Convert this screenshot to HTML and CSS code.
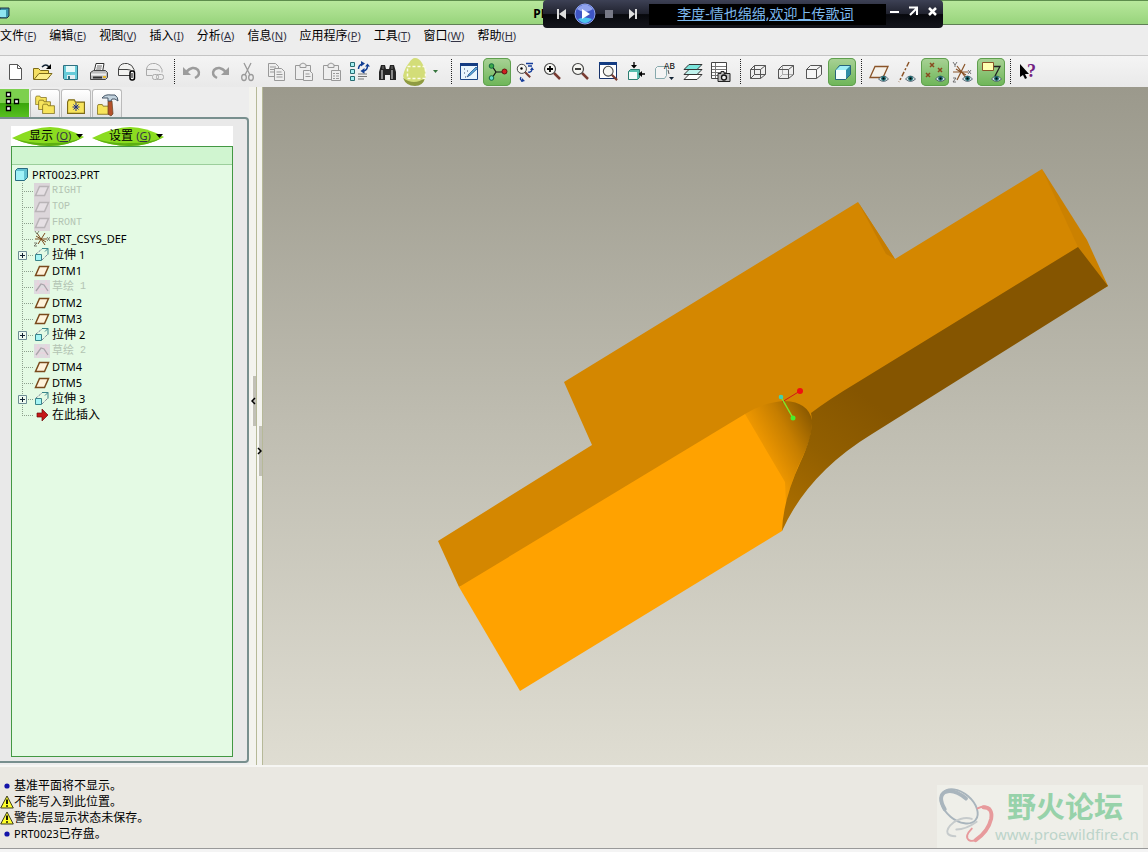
FILE: index.html
```html
<!DOCTYPE html>
<html lang="zh-CN">
  <head>
    <meta charset="UTF-8" />
    <meta name="viewport" content="width=device-width, initial-scale=1.0" />
    <title>PRT0023</title>
    <link rel="stylesheet" href="styles.css">
  </head>
  <body>
    <!-- shared icons -->
    <svg class="defs" aria-hidden="true">
      <symbol id="branch" viewBox="0 0 22 16"><path class="dots" d="M10.5 0v16M12 8.500h9" /></symbol>
      <symbol id="last" viewBox="0 0 22 16"><path class="dots" d="M10.500 0v9M12 8.500h9" /></symbol>
      <symbol id="plus" viewBox="0 0 22 16"><path class="dots" d="M10.500 0v16M12 8.500h9" /><path d="M6.500 4.500h8v8h-8z" fill="#eefaf0" stroke="#6d8c94" /><path d="M8 8.500h5M10.500 6v5" stroke="#123" /></symbol>
      <symbol id="plane" viewBox="0 0 16 16"><path d="M5.500 3.500h9l-4 9h-9z" fill="#fff3dc" stroke="#7a4a1c" stroke-width="1.500" /></symbol>
      <symbol id="plane-off" viewBox="0 0 16 16"><path d="M0 0h16v16H0z" fill="#dcd6da" /><path d="M5.500 3.500h9l-4 9h-9z" fill="#e6e0e4" stroke="#b9b4b7" stroke-width="1.500" /></symbol>
      <symbol id="sketch-off" viewBox="0 0 16 16"><path d="M0 1h16v14H0z" fill="#dedbdf" /><path d="M1 5h14M1 10h14M4 1v14M12 1v14" stroke="#ecd0dd" /><path d="M2 12l5-7 3 1 4 6" fill="none" stroke="#a9a5aa" stroke-width="1.300" /></symbol>
      <symbol id="extrude" viewBox="0 0 16 16"><path d="M1.500 7.500h6v6h-6z" fill="#a5f4f4" stroke="#39858b" /><path d="M2 7l6-5M8 13l6-6" stroke="#557" stroke-dasharray="1 1" /><path d="M8 1.500h6v6M11 4.500l3-3" fill="none" stroke="#39858b" /></symbol>
      <symbol id="csys" viewBox="0 0 16 16"><path d="M1 8h12M3 2l8 12M11 2L4 13M2 5l10 6" stroke="#7a4a1c" fill="none" /><path d="M1 0l2 3 2-3M13 6l3 4m0-4l-3 4M0 12h3l-3 3h3" stroke="#665" fill="none" stroke-width=".8" /></symbol>
      <symbol id="part" viewBox="0 0 16 16"><path d="M1.500 3.500l2-2h10v9l-3 3h-9z" fill="#62c3d3" stroke="#276b80" /><path d="M2 4h8v9H2z" fill="#a0f2f8" /></symbol>
      <symbol id="insert" viewBox="0 0 16 16"><path d="M3 6h5V2l6 6-6 6v-4H3z" fill="#c41717" stroke="#6d0c0c" stroke-width=".7" /></symbol>
      <symbol id="warn" viewBox="0 0 14 14"><path d="M7 1l6.300 12H.7z" fill="#ffff2a" stroke="#3b3b20" /><path d="M7 4.500v4.500M7 10.300v1.500" stroke="#000" stroke-width="1.800" /></symbol>
      <symbol id="dot" viewBox="0 0 14 14"><circle cx="7" cy="7" r="2.600" fill="#1414a8" /></symbol>
      <symbol id="eye" viewBox="0 0 10 7"><path d="M0 4q5-6 10 0-5 5-10 0z" fill="#cfe3e3" stroke="#345" stroke-width=".7" /><circle cx="5" cy="3.500" r="2.400" fill="#17646b" /><circle cx="5" cy="3.500" r="1" /></symbol>
      <symbol id="lens" viewBox="0 0 18 18"><path d="M11 11l6 6" stroke="#7a3c32" stroke-width="2.500" /><circle cx="7" cy="7" r="5.500" fill="#f6f6f2" stroke="#444" stroke-width="1.200" /></symbol>
      <symbol id="folder" viewBox="0 0 16 14"><path d="M.5 3.500l1-2h5l1 2h8v10H.5z" fill="#f7e45c" stroke="#7c6a18" /></symbol>
    </svg>

    <header class="titlebar">
      <svg class="app-icon" viewBox="0 0 10 12"><path d="M0 1h9v8l-2 2H0z" fill="#3a96aa" stroke="#234" /><path d="M0 3h6v7H0z" fill="#8fe6f2" /></svg>
      <h1>PR</h1>
    </header>

    <nav class="menubar">
      <button>文件<span>(<u>F</u>)</span></button>
      <button>编辑<span>(<u>E</u>)</span></button>
      <button>视图<span>(<u>V</u>)</span></button>
      <button>插入<span>(<u>I</u>)</span></button>
      <button>分析<span>(<u>A</u>)</span></button>
      <button>信息<span>(<u>N</u>)</span></button>
      <button>应用程序<span>(<u>P</u>)</span></button>
      <button>工具<span>(<u>T</u>)</span></button>
      <button>窗口<span>(<u>W</u>)</span></button>
      <button>帮助<span>(<u>H</u>)</span></button>
    </nav>

    <div class="toolbar">
      <button aria-label="新建"><svg viewBox="0 0 28 28"><path d="M8.500 6.500h8l4 4v11h-12z" fill="#fff" stroke="#555" /><path d="M16.500 6.500v4h4" fill="none" stroke="#555" /></svg></button>
      <button aria-label="打开"><svg viewBox="0 0 28 28"><path d="M4.500 21.500v-11h5l2 2h8v3" fill="#f5df62" stroke="#7c6a18" /><path d="M5 21.500l5-6h13l-5 6z" fill="#fbee8a" stroke="#7c6a18" /><path d="M13 9q4-4 7 0" fill="none" stroke="#123" stroke-width="1.500" /><path d="M22 6v5h-5z" /></svg></button>
      <button aria-label="保存"><svg viewBox="0 0 28 28"><path d="M6.500 7.500h14v14h-13l-1-1z" fill="#67ccd9" stroke="#2f7080" /><path d="M9 8h9v6H9z" fill="#e6fafa" /><path d="M10 17h8v4h-8z" fill="#e6eef0" /><path d="M11 18h2v3h-2z" fill="#2f7080" /></svg></button>
      <button aria-label="打印"><svg viewBox="0 0 28 28"><path d="M9 14l2-8.500h8L17.500 14" fill="#fff" stroke="#333" /><path d="M12 8h5M11.500 10h5M11 12h5" stroke="#666" /><path d="M5.500 14.500l3-2h12l2 2v5l-2 2h-15z" fill="#bbb" stroke="#444" /><path d="M6 15.500h15v2H6z" fill="#eee" /><path d="M8 19.500h9" stroke="#333" stroke-width="2" /><path d="M18 19h3" stroke="#e8b72c" stroke-width="2" /></svg></button>
      <button aria-label="发送邮件"><svg viewBox="0 0 28 28"><path d="M17 17.500H5.500V11q1-5 6-5.500h3q5 1 6.500 6v2" fill="#f2f2f0" stroke="#444" /><path d="M6 11.500h8q4 0 5 2" fill="none" stroke="#444" /><rect x="17" y="13" width="4.500" height="9" rx="2" fill="#fff" stroke="#000" stroke-width="1.500" /><path d="M19 15v5" stroke="#000" /></svg></button>
      <button aria-label="发送链接"><svg viewBox="0 0 28 28"><g fill="none" stroke="#aaa"><path d="M11 17.500H5.500V11q1-5 6-5.500h3q5 1 6.500 6v3M6 11.500h8q4 0 5 2" /><rect x="11.500" y="16.500" width="6" height="5" rx="2" /><rect x="15.500" y="16.500" width="7" height="5" rx="2" /></g></svg></button>
      <i class="sep"></i>
      <button aria-label="撤销"><svg viewBox="0 0 28 28"><path d="M8 14q7-7 12-2 3 5-3 8" fill="none" stroke="#9c9c9c" stroke-width="2.500" /><path d="M5 9v8h8z" fill="#9c9c9c" /></svg></button>
      <button aria-label="重做"><svg viewBox="0 0 28 28"><path d="M20 14q-7-7-12-2-3 5 3 8" fill="none" stroke="#9c9c9c" stroke-width="2.500" /><path d="M23 9v8h-8z" fill="#9c9c9c" /></svg></button>
      <button aria-label="剪切"><svg viewBox="0 0 28 28"><g fill="none" stroke="#999" stroke-width="1.300"><path d="M10 5l6 12M17 5l-6 12" /><ellipse cx="10" cy="19.500" rx="2.300" ry="3" /><ellipse cx="17" cy="19.500" rx="2.300" ry="3" /></g></svg></button>
      <button aria-label="复制"><svg viewBox="0 0 28 28"><g fill="#eee" stroke="#999"><path d="M6.500 5.500h7l3 3v10h-10z" /><path d="M8 9h6M8 11.500h6M8 14h6" /><path d="M12.500 10.500h7l3 3v9h-10z" /><path d="M14.500 14h5M14.500 16.500h6M14.500 19h6" /></g></svg></button>
      <button aria-label="粘贴"><svg viewBox="0 0 28 28"><g fill="#eee" stroke="#999"><path d="M5.500 7.500h15v14h-15z" /><path d="M10 9.500V6.500l3-1.500 3 1.500v3z" /><path d="M13.500 12.500h6l3 3v7h-9z" /><path d="M15.500 16h4M15.500 18.500h5" /></g></svg></button>
      <button aria-label="选择性粘贴"><svg viewBox="0 0 28 28"><g fill="#eee" stroke="#999"><path d="M5.500 7.500h15v14h-15z" /><path d="M10 9.500V6.500l3-1.500 3 1.500v3z" /><path d="M13.500 12.500h9v10h-9z" /><path d="M15 15.500h2M18 15.500h3M15 18h2M18 18h3M15 20.500h2M18 20.500h3" /></g></svg></button>
      <button aria-label="再生"><svg viewBox="0 0 28 28"><g fill="#a5eef0" stroke="#286c72"><path d="M4.500 4.500h4v4h-4zM4.500 11.500h4v4h-4zM4.500 18.500h4v4h-4z" /></g><path d="M12.500 11q0-4 4-5M21.500 8q0 4-4 5" fill="none" stroke="#123f94" stroke-width="1.500" /><path d="M15 3l4 2.500-4 3zM18.500 10v6l-4-3zM19 8.500h5l-2.500-3z" fill="#123f94" /><path d="M12 16h9M12 18.500h9M12 21h6" stroke="#777" /></svg></button>
      <button aria-label="查找"><svg viewBox="0 0 28 28"><path d="M5 14l2-7h4l1 4h3l1-4h4l2 7v8h-6v-5h-5v5H5z" fill="#252525" /><path d="M8 12v9M18 12v9" stroke="#aaa" stroke-width="1.500" /><path d="M9 8v3M18 8v3" stroke="#777" /></svg></button>
      <button aria-label="选取"><svg viewBox="0 0 28 28"><path d="M1 18Q3 9 7 5q3-5 6-5 4 0 7 5 3 5 4 13-2 9-11 9-10 0-12-9z" fill="#d3dd78" /><path d="M1 20q11 8 22 0-2 8-10 8-9 0-12-8z" fill="#8f9b42" /><path d="M5.500 8.500h18v12h-18z" fill="none" stroke="#fbfbe8" stroke-dasharray="3 2" stroke-width="1.500" /></svg></button>
      <button class="drop" aria-label="选取选项"><svg viewBox="0 0 16 28"><path d="M3 12h5l-2.500 3z" fill="#34733c" /></svg></button>
      <i class="sep"></i>
      <button aria-label="重画"><svg viewBox="0 0 28 28"><path d="M5.500 5.500h17v16h-17z" fill="#e9f6fd" stroke="#1b4686" /><path d="M5 5h18v3H5z" fill="#143c82" /><path d="M9 11l1 0M12 13h1M9 15h1M13 17h1M10 19h1" stroke="#346" /><path d="M12 19l2-3 7-7 1.500 1.500-7 6.500z" fill="#5aa9d8" stroke="#1b4686" stroke-width=".7" /></svg></button>
      <button class="on" aria-label="旋转中心"><svg viewBox="0 0 28 28"><path d="M9 8l4 6-4 6M13 14h10" fill="none" stroke="#111" stroke-width="1.200" /><circle cx="8.500" cy="8" r="2.300" fill="#3aa946" stroke="#164" /><circle cx="8.500" cy="20" r="2.300" fill="#63d8c8" stroke="#164" /><circle cx="21.500" cy="13.500" r="2.500" fill="#d02020" stroke="#611" /></svg></button>
      <button aria-label="定向模式"><svg viewBox="0 0 28 28"><use href="#lens" x="5" y="5" width="15" height="15" /><circle cx="10.500" cy="10.500" r="1.200" /><path d="M15 5.500h7M17 8h4M21 12q-1 3-4 2M10 19q-2 3 2 4" fill="none" stroke="#143c9a" stroke-width="1.300" /><path d="M11 20l3 3-4 1zM21 9l2 3h-4z" fill="#143c9a" /></svg></button>
      <button aria-label="放大"><svg viewBox="0 0 28 28"><use href="#lens" x="4" y="4" width="18" height="18" /><path d="M8 11h6M11 8v6" stroke="#000" stroke-width="1.800" /></svg></button>
      <button aria-label="缩小"><svg viewBox="0 0 28 28"><use href="#lens" x="4" y="4" width="18" height="18" /><path d="M8 11h6" stroke="#000" stroke-width="1.500" /></svg></button>
      <button aria-label="重新调整"><svg viewBox="0 0 28 28"><path d="M4.500 5.500h17v15h-17z" fill="#fff" stroke="#16326b" /><path d="M4 4h18v3H4z" fill="#143c82" /><use href="#lens" x="7" y="7" width="16" height="16" /></svg></button>
      <button aria-label="重定向"><svg viewBox="0 0 28 28"><path d="M5.500 13.500l2-2h9v8l-2 2h-9z" fill="#56bfae" stroke="#2d7c70" /><path d="M6 14h8v7H6z" fill="#f3fbf9" /><path d="M11 4v4M17 16h5" stroke="#000" stroke-width="1.300" /><path d="M8 7h6l-3 3.500zM19 13v6l-3.500-3z" /></svg></button>
      <button aria-label="已保存视图"><svg viewBox="0 0 28 28"><path d="M4.500 10.500l2-2h9v9l-2 3h-9z" fill="#f4f4f4" stroke="#87a9ad" /><text x="13" y="11" class="ab">AB</text><path d="M18 19h5l-2.500 3z" fill="#123" /><path d="M17 12l1 4" stroke="#555" /></svg></button>
      <button aria-label="层"><svg viewBox="0 0 28 28"><g stroke="#333"><path d="M5 21.500l5-5h13l-5 5z" fill="#fff" /><path d="M5 16.500l5-5h13l-5 5z" fill="#bff3ee" /><path d="M5 11.500l5-5h13l-5 5z" fill="#7be5dc" /></g></svg></button>
      <button aria-label="视图管理器"><svg viewBox="0 0 28 28"><path d="M4.500 4.500h15v16h-15z" fill="#fff" stroke="#444" /><path d="M8.500 5v15M5 8.500h14M5 11.500h14M5 14.500h14M5 17.500h14" stroke="#777" /><path d="M11 15.500h3v-2h3v2h6v8H11z" fill="#bbb" stroke="#222" /><circle cx="17" cy="19.500" r="2.500" fill="#eee" stroke="#111" stroke-width="1.300" /></svg></button>
      <i class="sep"></i>
      <button aria-label="线框"><svg viewBox="0 0 28 28"><path d="M6.500 11.500h10v9h-10zM10.500 7.500h11v9h-11zM6.500 11.500l4-4M16.500 11.500l5-4M6.500 20.500l4-4M16.500 20.500l5-4" fill="none" stroke="#555" /></svg></button>
      <button aria-label="隐藏线"><svg viewBox="0 0 28 28"><path d="M10.500 8v8.500h11M6.500 20.500l4-4" fill="none" stroke="#aaa" /><path d="M6.500 11.500h10v9h-10zl4-4h11v9l-5 4M16.500 11.500l5-4" fill="none" stroke="#555" /></svg></button>
      <button aria-label="无隐藏线"><svg viewBox="0 0 28 28"><path d="M6.500 11.500h10v9h-10zl4-4h11v9l-5 4M16.500 11.500l5-4" fill="#f5f5f5" stroke="#555" /></svg></button>
      <button class="on" aria-label="着色"><svg viewBox="0 0 28 28"><path d="M7.500 12.500l4-5h11v9l-5 5h-10z" fill="#2f8ea5" stroke="#27647a" /><path d="M8 12l4-4h10l-4 4z" fill="#9eeef5" /><path d="M8 12h10v9H8z" fill="#f4ffff" /></svg></button>
      <i class="sep"></i>
      <button aria-label="基准平面"><svg viewBox="0 0 28 28"><path d="M10 8.500h13l-5 11H5z" fill="#f4f1ea" stroke="#8a5428" stroke-width="1.300" /><use href="#eye" x="13" y="17" width="11" height="7" /></svg></button>
      <button aria-label="基准轴"><svg viewBox="0 0 28 28"><path d="M16 4L6 24" stroke="#8a5428" stroke-width="1.500" stroke-dasharray="5 2 2 2" /><use href="#eye" x="12" y="17" width="11" height="7" /></svg></button>
      <button class="on" aria-label="基准点"><svg viewBox="0 0 28 28"><path d="M9 5l4 4m0-4l-4 4M17 10l4 4m0-4l-4 4M5 15l4 4m0-4l-4 4" stroke="#8a4a20" stroke-width="1.500" /><use href="#eye" x="14" y="17" width="11" height="7" /></svg></button>
      <button aria-label="坐标系"><svg viewBox="0 0 28 28"><path d="M4 14h15M8 8l9 12M16 6L8 22M7 11l10 6" stroke="#8a5428" stroke-width="1.200" /><path d="M4 4l2 3 2-3M6 7v2M19 12l3 4m0-4l-3 4M4 20h3l-3 4h3" stroke="#555" fill="none" stroke-width=".8" /><use href="#eye" x="13" y="17" width="11" height="7" /></svg></button>
      <button class="on" aria-label="注释"><svg viewBox="0 0 28 28"><path d="M5.500 4.500h11v8h-11z" fill="#ffffb0" stroke="#8a5428" /><path d="M17 8.500h6L18 18" fill="none" stroke="#222" stroke-width="1.300" /><use href="#eye" x="14" y="17" width="11" height="7" /></svg></button>
      <i class="sep"></i>
      <button aria-label="上下文帮助"><svg viewBox="0 0 28 28"><path d="M6 6v13l3-2 2 4 2-1-2-4h4z" /><text x="13" y="19" class="help">?</text></svg></button>
    </div>

    <main class="workspace">
      <aside class="navigator">
        <div class="tabs">
          <button class="active" aria-label="模型树"><svg viewBox="0 0 30 28"><path d="M6.500 4.500h4v4h-4zM6.500 11.500h4v4h-4zM6.500 18.500h4v4h-4zM14.500 11.500h4v4h-4z" fill="#fff" stroke="#000" stroke-width="1.300" /></svg></button>
          <button aria-label="文件夹浏览器"><svg viewBox="0 0 30 28"><use href="#folder" x="5" y="5" width="12" height="10" /><use href="#folder" x="8" y="9" width="13" height="11" /><use href="#folder" x="12" y="13" width="13" height="11" /></svg></button>
          <button aria-label="收藏夹"><svg viewBox="0 0 30 28"><use href="#folder" x="6" y="8" width="18" height="16" /><path d="M15 13v8M11.500 17h7M12.500 14.500l5 5M17.500 14.500l-5 5" stroke="#1c2c8c" /></svg></button>
          <button aria-label="连接"><svg viewBox="0 0 30 28"><use href="#folder" x="5" y="13" width="13" height="12" /><path d="M16 11h4l1 13-2 2-3-2z" fill="#b5502a" stroke="#642" stroke-width=".7" /><path d="M10 8q3-4 9-3h4q3 2 3 6-3-3-6-2l-1 2h-3V8z" fill="#c3d3de" stroke="#456" /></svg></button>
        </div>
        <section class="panel">
          <div class="tree-tools">
            <button><svg viewBox="0 0 72 20"><path d="M0 12Q22 1 38 1q16 0 34 10-16 9-35 9T0 12z" fill="#8bdc20" /><path d="M0 12q18 6 38 5 20 0 34-6-16 9-35 9T0 12z" fill="#5daf12" /><path d="M64 8h7l-3.500 4z" /></svg><b>显示 <span>(<u>O</u>)</span></b></button>
            <button><svg viewBox="0 0 72 20"><path d="M0 12Q22 1 38 1q16 0 34 10-16 9-35 9T0 12z" fill="#8bdc20" /><path d="M0 12q18 6 38 5 20 0 34-6-16 9-35 9T0 12z" fill="#5daf12" /><path d="M64 8h7l-3.500 4z" /></svg><b>设置 <span>(<u>G</u>)</span></b></button>
          </div>
          <div class="tree">
            <div class="tree-head"></div>
            <ul>
              <li class="root"><svg class="icon"><use href="#part" /></svg><span>PRT0023.PRT</span></li>
              <li class="off"><svg class="branch"><use href="#branch" /></svg><svg class="icon"><use href="#plane-off" /></svg>RIGHT</li>
              <li class="off"><svg class="branch"><use href="#branch" /></svg><svg class="icon"><use href="#plane-off" /></svg>TOP</li>
              <li class="off"><svg class="branch"><use href="#branch" /></svg><svg class="icon"><use href="#plane-off" /></svg>FRONT</li>
              <li><svg class="branch"><use href="#branch" /></svg><svg class="icon"><use href="#csys" /></svg>PRT_CSYS_DEF</li>
              <li><svg class="branch"><use href="#plus" /></svg><svg class="icon"><use href="#extrude" /></svg><em>拉伸</em> 1</li>
              <li><svg class="branch"><use href="#branch" /></svg><svg class="icon"><use href="#plane" /></svg>DTM1</li>
              <li class="off"><svg class="branch"><use href="#branch" /></svg><svg class="icon"><use href="#sketch-off" /></svg><em>草绘</em> 1</li>
              <li><svg class="branch"><use href="#branch" /></svg><svg class="icon"><use href="#plane" /></svg>DTM2</li>
              <li><svg class="branch"><use href="#branch" /></svg><svg class="icon"><use href="#plane" /></svg>DTM3</li>
              <li><svg class="branch"><use href="#plus" /></svg><svg class="icon"><use href="#extrude" /></svg><em>拉伸</em> 2</li>
              <li class="off"><svg class="branch"><use href="#branch" /></svg><svg class="icon"><use href="#sketch-off" /></svg><em>草绘</em> 2</li>
              <li><svg class="branch"><use href="#branch" /></svg><svg class="icon"><use href="#plane" /></svg>DTM4</li>
              <li><svg class="branch"><use href="#branch" /></svg><svg class="icon"><use href="#plane" /></svg>DTM5</li>
              <li><svg class="branch"><use href="#plus" /></svg><svg class="icon"><use href="#extrude" /></svg><em>拉伸</em> 3</li>
              <li><svg class="branch"><use href="#last" /></svg><svg class="icon"><use href="#insert" /></svg><em>在此插入</em></li>
            </ul>
          </div>
        </section>
      </aside>
      <div class="sash sash-left"><button aria-label="收起"><svg viewBox="0 0 5 50"><path d="M4 22l-3 3 3 3" /></svg></button></div>
      <div class="sash sash-right"><button aria-label="展开"><svg viewBox="0 0 5 50"><path d="M1 22l3 3-3 3" /></svg></button></div>

      <div class="viewport">
        <svg viewBox="263 87 885 678" role="img" aria-label="PRT0023">
          <defs>
            <linearGradient id="fillet" gradientUnits="userSpaceOnUse" x1="765" y1="450" x2="815" y2="422">
              <stop offset="0" stop-color="#ee9700" />
              <stop offset=".5" stop-color="#c67e00" />
              <stop offset="1" stop-color="#8a5900" />
            </linearGradient>
            <linearGradient id="side" gradientUnits="userSpaceOnUse" x1="785" y1="515" x2="870" y2="400">
              <stop offset="0" stop-color="#ab6e00" />
              <stop offset=".5" stop-color="#925f00" />
              <stop offset="1" stop-color="#855500" />
            </linearGradient>
          </defs>
          <!-- top face -->
          <path d="M438 541L592 445 564 382 858 202 895 259 1042 169 1108 286 812 440 700 500 459 587z" fill="#d48700" />
          <path d="M858 202L886 254 895 259z" fill="#c67d00" />
          <path d="M1042 169L1087 240 1108 286 1078 247z" fill="#cb8100" />
          <!-- front face -->
          <path d="M459 587L745 414 L812 430 782 531 520 691z" fill="#ffa200" />
          <path d="M745 414Q764 402 785 401 808 402 812 420 813 435 803 456 792 478 786 503L785 482z" fill="url(#fillet)" />
          <!-- side face -->
          <path d="M1078 247L1108 286 872 434Q808 473 782 531 783 500 800 463 815 431 811 413 828 400 858 382z" fill="url(#side)" />
          <!-- spin center -->
          <path d="M782 402L800 391" stroke="#d01818" />
          <path d="M781 397L793 418" stroke="#7ce82a" stroke-width="1.500" />
          <circle cx="800" cy="391" r="3" fill="#f01010" />
          <circle cx="781" cy="397" r="2.300" fill="#45cfae" />
          <circle cx="793" cy="418" r="2.500" fill="#46ef2c" />
        </svg>
      </div>
    </main>

    <footer class="messages">
      <ul>
        <li><svg><use href="#dot" /></svg>基准平面将不显示。</li>
        <li><svg><use href="#warn" /></svg>不能写入到此位置。</li>
        <li><svg><use href="#warn" /></svg>警告:层显示状态未保存。</li>
        <li><svg><use href="#dot" /></svg><span>PRT0023</span>已存盘。</li>
      </ul>
      <div class="brand">
        <svg viewBox="0 0 60 62">
          <g fill="none" stroke-linecap="round">
            <ellipse cx="23" cy="21" rx="22" ry="14" transform="rotate(40 23 21)" stroke="#a9b5bd" stroke-width="2" />
            <path d="M8 24Q0 10 9 6q9-3 21 7" stroke="#a9b5bd" stroke-width="4" />
            <path d="M42 23q11-5 14 4 2 10-9 23-8 9-14 6-5-4 3-12" stroke="#e79a9c" stroke-width="2" />
            <path d="M48 22q10 0 8 12-3 13-16 22" stroke="#e79a9c" stroke-width="4" />
            <path d="M36 34q-8-3-18 3-9 7-7 12 2 3 8 3" stroke="#c6cbcc" stroke-width="2" />
            <path d="M20 45q10 0 21-8" stroke="#c6cbcc" stroke-width="2" />
          </g>
        </svg>
        <div>
          <strong>野火论坛</strong>
          <a href="#">www.proewildfire.cn</a>
        </div>
      </div>
    </footer>
    <div class="statusbar"></div>

    <div class="player">
      <div class="controls">
        <button aria-label="上一首"><svg viewBox="0 0 24 28"><path d="M8 9h2v10H8zM17 9v10l-7-5z" fill="#ddd" /></svg></button>
        <button aria-label="播放"><svg viewBox="0 0 24 28"><circle cx="12" cy="14" r="10" fill="#3e55c4" stroke="#8ea4ee" /><path d="M4 9q8-9 16 0-8 6-16 0z" fill="#91a3ee" /><path d="M5 19q7 8 14 0-7-3-14 0z" fill="#4dc5ee" /><path d="M9 9v10l8-5z" fill="#fff" /></svg></button>
        <button aria-label="停止"><svg viewBox="0 0 24 28"><path d="M8 10h8v8H8z" fill="#777986" /></svg></button>
        <button aria-label="下一首"><svg viewBox="0 0 24 28"><path d="M14 9h2v10h-2zM8 9v10l6-5z" fill="#ddd" /></svg></button>
      </div>
      <div class="lyric"><a href="#">李度-情也绵绵,欢迎上传歌词</a></div>
      <div class="window-buttons">
        <button aria-label="最小化"><svg viewBox="0 0 19 28"><path d="M4 12h9" stroke="#fff" stroke-width="2" /></svg></button>
        <button aria-label="还原"><svg viewBox="0 0 19 28"><path d="M4 7.500h8V15M12 8l-7 7" fill="none" stroke="#fff" stroke-width="2" /></svg></button>
        <button aria-label="关闭"><svg viewBox="0 0 19 28"><path d="M5 8l7 7M12 8l-7 7" stroke="#fff" stroke-width="2.500" /></svg></button>
      </div>
    </div>
  </body>
</html>
```

FILE: styles.css
```css
* {
  box-sizing: border-box;
  margin: 0;
  padding: 0;
}
html,
body {
  height: 100%;
}
body {
  display: flex;
  flex-direction: column;
  position: relative;
  overflow: hidden;
  background: #ededed;
  color: #000;
  font: 12px/16px "Noto Sans", "Noto Sans CJK SC", sans-serif;
}
button {
  border: 0;
  background: none;
  color: inherit;
  font: inherit;
}
ul {
  list-style: none;
}
svg {
  display: block;
}
.defs {
  position: absolute;
  width: 0;
  height: 0;
}
.dots {
  fill: none;
  stroke: #8da08d;
  stroke-dasharray: 1 1;
}

/* title and menu */
.titlebar {
  display: flex;
  align-items: center;
  height: 25px;
  border-top: 1px solid #5d8d4c;
  border-bottom: 1px solid #5f7f55;
  background: linear-gradient(#b8e89c, #98d47c);
}
.app-icon {
  width: 10px;
  height: 12px;
}
.titlebar h1 {
  flex: 1;
  padding: 2px 76px 0 0;
  text-align: center;
  font-size: 12px;
}
.menubar {
  display: flex;
  gap: 13px;
  height: 31px;
  padding-top: 3px;
  border-bottom: 1px solid #c4c4c4;
}
.menubar button {
  height: 16px;
  white-space: nowrap;
}
.menubar span,
.tree-tools span {
  color: #334;
  font-size: 11px;
}

/* toolbar */
.toolbar {
  display: flex;
  align-items: center;
  height: 31px;
  padding-left: 1px;
  background: linear-gradient(#f4f4f4, #e9e9e9);
}
.toolbar button {
  width: 28px;
  height: 28px;
}
.toolbar svg {
  width: 28px;
  height: 28px;
}
.toolbar .drop,
.toolbar .drop svg {
  width: 16px;
}
.toolbar .on {
  border-radius: 5px;
  background: linear-gradient(#a9d296, #6db557);
  box-shadow: inset 0 0 0 1px #5f9f4e;
}
.sep {
  width: 1px;
  height: 25px;
  margin: 0 3px 0 5px;
  border-left: 1px dotted #222;
}
.toolbar .sep {
  flex: 0 0 1px;
}
.ab {
  font: 9px "Liberation Mono", monospace;
}
.help {
  fill: #702082;
  font: bold 18px "Liberation Serif", serif;
}

/* model tree */
.workspace {
  display: flex;
  flex: 1;
  min-height: 0;
}
.navigator {
  display: flex;
  flex-direction: column;
  width: 249px;
  padding-bottom: 2px;
}
.tabs {
  display: flex;
  gap: 1px;
  height: 30px;
  padding-top: 2px;
}
.tabs button {
  width: 30px;
  height: 28px;
  border: 1px solid #bbb;
  border-bottom: 0;
  border-radius: 3px 3px 0 0;
  background: linear-gradient(#fff, #e4e4e4);
}
.tabs .active {
  width: 29px;
  border: 0;
  border-radius: 0;
  background: linear-gradient(#7dd04e 50%, #3aa50c 50%, #56c01f);
}
.tabs svg {
  width: 30px;
  height: 28px;
  margin: -1px;
}
.tabs .active svg {
  margin: -2px 0 0;
}
.panel {
  display: flex;
  flex: 1;
  flex-direction: column;
  padding: 7px 14px 4px 11px;
  border: 2px solid #788f8e;
  border-left: 0;
  border-radius: 0 4px 4px 0;
  background: #e9e9e9;
}
.tree-tools {
  display: flex;
  gap: 8px;
  height: 20px;
  padding-left: 1px;
  background: #fff;
}
.tree-tools button {
  display: grid;
  width: 72px;
  height: 20px;
}
.tree-tools svg,
.tree-tools b {
  grid-area: 1 / 1;
}
.tree-tools b {
  padding: 2px 0 0 17px;
  font-weight: normal;
  text-align: left;
  white-space: nowrap;
}
.tree {
  flex: 1;
  border: 1px solid #439843;
  background: #e4fae4;
}
.tree-head {
  height: 18px;
  margin-bottom: 2px;
  border-bottom: 1px solid #9bce9b;
  background: #d0f5d0;
}
.tree li {
  display: flex;
  align-items: center;
  height: 16px;
  font-size: 11px;
  white-space: pre;
}
.tree .root {
  padding-left: 2px;
}
.tree em {
  font-size: 12px;
  font-style: normal;
}
.tree .off {
  color: #b3c4b3;
  font: 10px/12px "Liberation Mono", "Noto Sans CJK SC", monospace;
}
.tree .off em {
  font-size: 11px;
}
.branch {
  width: 22px;
  height: 16px;
}
.icon {
  width: 16px;
  height: 16px;
  margin-right: 2px;
}

/* sashes beside the viewport */
.sash {
  display: flex;
  align-items: center;
  width: 8px;
  padding-left: 2px;
  border-right: 1px solid #b6b998;
  background: #f3f3ee;
}
.sash-right {
  width: 6px;
  padding-left: 0;
}
.sash button {
  width: 5px;
  height: 50px;
  margin-bottom: 50px;
  background: linear-gradient(90deg, #f7f7f3 50%, #c1c0b6 50%);
}
.sash-right button {
  margin: 50px 0 0;
}
.sash path {
  fill: none;
  stroke: #000;
  stroke-width: 1.5;
}

.viewport {
  flex: 1;
  min-width: 0;
  background: linear-gradient(#9b998c, #bfbdb1 50%, #dfddd2);
}
.viewport svg {
  width: 100%;
  height: 100%;
}

/* messages */
.messages {
  display: flex;
  justify-content: space-between;
  height: 83px;
  padding: 11px 5px 0 0;
  border-top: 2px solid #f6f6f3;
  background: #eae8e2;
}
.messages li {
  display: flex;
  align-items: center;
  height: 16px;
}
.messages li svg {
  width: 14px;
  height: 14px;
}
.messages li span {
  font-size: 11px;
}
.brand {
  display: flex;
  width: 206px;
  height: 63px;
  margin-top: 7px;
  background: #efefe9;
}
.brand svg {
  flex: none;
  width: 58px;
  height: 62px;
}
.brand strong {
  display: block;
  padding-left: 12px;
  color: #97d2aa;
  font: bold 29px/40px "Noto Sans CJK SC", sans-serif;
}
.brand a {
  display: block;
  color: #bcd4ca;
  font: 15px/18px "Noto Sans", sans-serif;
  text-decoration: none;
}
.statusbar {
  height: 4px;
  border-top: 1px solid #999;
  background: #f4f4f4;
}

/* floating music player */
.player {
  display: flex;
  position: absolute;
  top: 0;
  right: 205px;
  width: 400px;
  height: 28px;
  border-radius: 4px;
  background: linear-gradient(#3d4155, #20222e 50%, #07080c 52%, #14151c);
}
.controls {
  display: flex;
  width: 106px;
  padding-left: 6px;
}
.controls button,
.controls svg {
  width: 24px;
  height: 28px;
}
.lyric {
  flex: 1;
  margin: 4px 0 3px;
  padding-right: 4px;
  background: #000;
  text-align: center;
}
.lyric a {
  color: #7db9ee;
  font: 14px/20px "Noto Sans", "Noto Sans CJK SC", sans-serif;
}
.window-buttons {
  display: flex;
  width: 57px;
}
.window-buttons button,
.window-buttons svg {
  width: 19px;
  height: 28px;
}
```
